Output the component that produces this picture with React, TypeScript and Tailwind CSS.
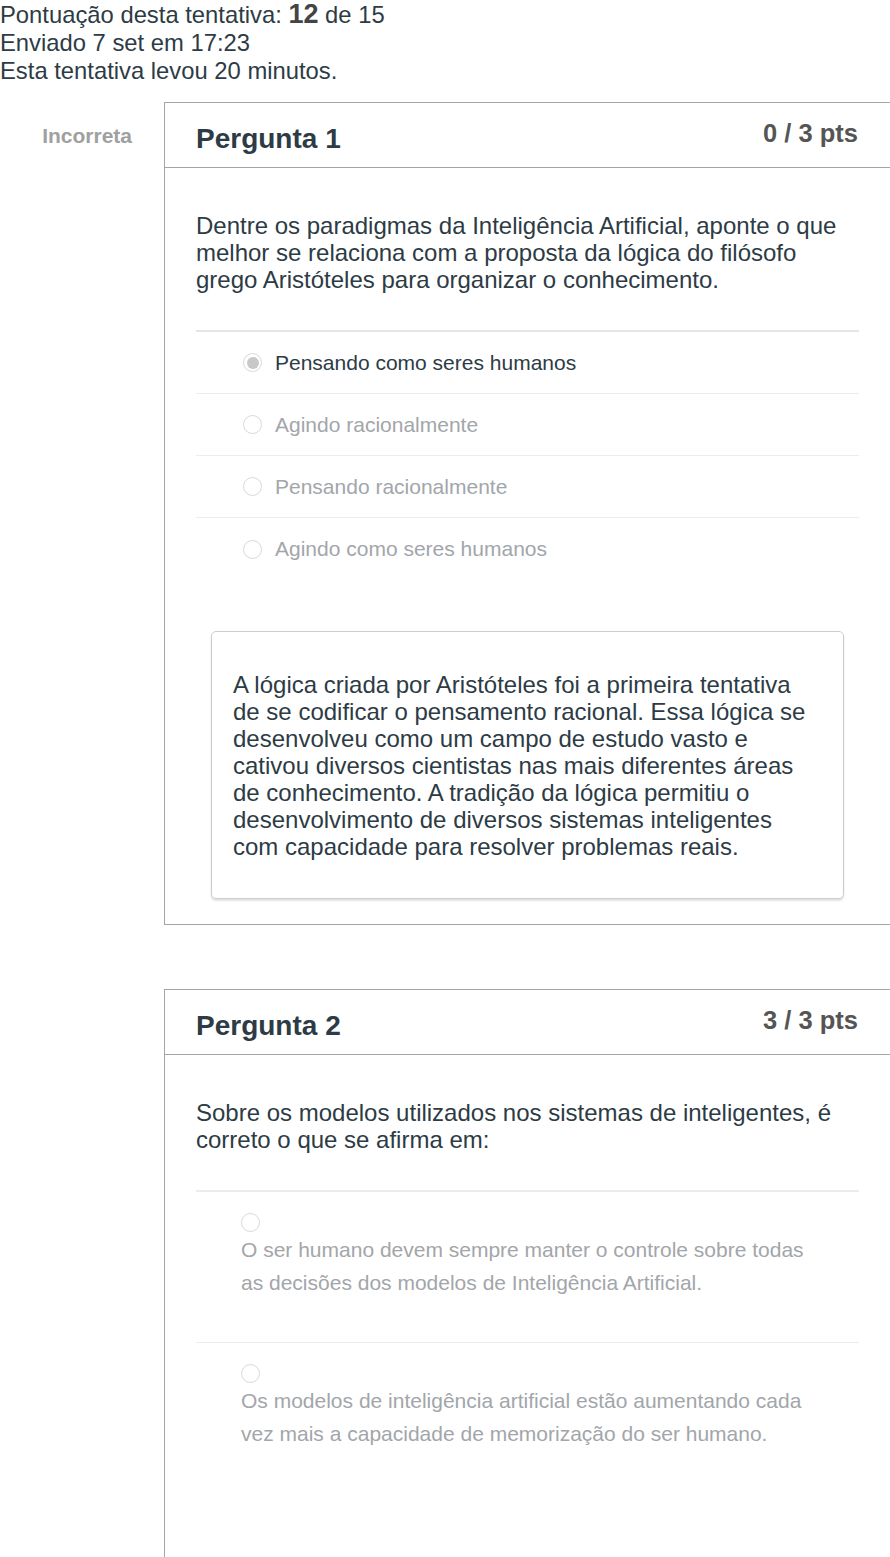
const font = { fontFamily: '"Liberation Sans", Arial, sans-serif' };

type Opt = { lines: string[]; selected?: boolean };

const Radio = ({ selected }: { selected?: boolean }) => (
  <span className="flex items-center justify-center w-[19px] h-[19px] rounded-full border border-[#d7d9db] bg-white shrink-0">
    {selected && <span className="w-[12px] h-[12px] rounded-full bg-[#c8c8c8]" />}
  </span>
);

const Lines = ({ lines }: { lines: string[] }) => (
  <>
    {lines.map((l, i) => (
      <span key={i}>
        {l}
        {i < lines.length - 1 && <br />}
      </span>
    ))}
  </>
);

const CardHeader = ({ title, pts }: { title: string; pts: string }) => (
  <div className="flex justify-between h-[65px] pl-[31px] pr-8 border-b border-[#a5a5a5]">
    <h2 className="mt-[21px] text-[28px] leading-[30px] font-bold text-[#2d3b45]">{title}</h2>
    <span className="mt-[15px] text-[25.5px] leading-[30px] font-bold text-[#555]">{pts}</span>
  </div>
);

const options1: Opt[] = [
  { lines: ["Pensando como seres humanos"], selected: true },
  { lines: ["Agindo racionalmente"] },
  { lines: ["Pensando racionalmente"] },
  { lines: ["Agindo como seres humanos"] },
];

const options2: Opt[] = [
  {
    lines: [
      "O ser humano devem sempre manter o controle sobre todas",
      "as decisões dos modelos de Inteligência Artificial.",
    ],
  },
  {
    lines: [
      "Os modelos de inteligência artificial estão aumentando cada",
      "vez mais a capacidade de memorização do ser humano.",
    ],
  },
];

export default function App() {
  return (
    <div className="w-[890px] min-h-[1557px] bg-white text-[#2d3b45] overflow-hidden" style={font}>
      <div className="text-[23.8px] leading-[28px] text-[#2d3b45] whitespace-nowrap">
        <div>
          Pontuação desta tentativa: <span className="text-[27px] font-bold text-[#444]">12</span> de 15
        </div>
        <div>Enviado 7 set em 17:23</div>
        <div>Esta tentativa levou 20 minutos.</div>
      </div>

      {/* Pergunta 1 */}
      <div className="flex mt-[17px]">
        <div className="w-[164px] shrink-0 pt-[22px] pr-[32px] text-right text-[21px] leading-[24px] font-bold text-[#a0a0a0]">
          Incorreta
        </div>
        <div className="flex-1 border border-r-0 border-[#a5a5a5]">
          <CardHeader title="Pergunta 1" pts="0 / 3 pts" />
          <div className="pl-[31px] pr-[31px] pt-[44px] pb-[25px]">
            <p className="text-[24px] leading-[27px] text-[#2d3b45] whitespace-nowrap">
              <Lines
                lines={[
                  "Dentre os paradigmas da Inteligência Artificial, aponte o que",
                  "melhor se relaciona com a proposta da lógica do filósofo",
                  "grego Aristóteles para organizar o conhecimento.",
                ]}
              />
            </p>
            <div className="mt-[37px] border-t-2 border-[#e5e5e5]">
              {options1.map((o, i) => (
                <div
                  key={i}
                  className={`flex items-center gap-[13px] h-[62px] pl-[47px] ${
                    i < options1.length - 1 ? "border-b border-[#ececec]" : ""
                  }`}
                >
                  <Radio selected={o.selected} />
                  <span className={`text-[21px] ${o.selected ? "text-[#2d3b45]" : "text-[#a2a6aa]"}`}>
                    {o.lines[0]}
                  </span>
                </div>
              ))}
            </div>
            <div className="mx-[15px] mt-[51px] rounded-[5px] border border-[#c7cdd1] shadow-[0_2px_2px_rgba(0,0,0,0.12)] pl-[21px] pt-[39px] pb-[38px]">
              <p className="text-[24px] leading-[27px] text-[#2d3b45] whitespace-nowrap">
                <Lines
                  lines={[
                    "A lógica criada por Aristóteles foi a primeira tentativa",
                    "de se codificar o pensamento racional. Essa lógica se",
                    "desenvolveu como um campo de estudo vasto e",
                    "cativou diversos cientistas nas mais diferentes áreas",
                    "de conhecimento. A tradição da lógica permitiu o",
                    "desenvolvimento de diversos sistemas inteligentes",
                    "com capacidade para resolver problemas reais.",
                  ]}
                />
              </p>
            </div>
          </div>
        </div>
      </div>

      {/* Pergunta 2 */}
      <div className="flex mt-[64px]">
        <div className="w-[164px] shrink-0" />
        <div className="flex-1 border border-r-0 border-b-0 border-[#a5a5a5] min-h-[570px]">
          <CardHeader title="Pergunta 2" pts="3 / 3 pts" />
          <div className="pl-[31px] pr-[31px] pt-[44px]">
            <p className="text-[24px] leading-[27px] text-[#2d3b45] whitespace-nowrap">
              <Lines
                lines={["Sobre os modelos utilizados nos sistemas de inteligentes, é", "correto o que se afirma em:"]}
              />
            </p>
            <div className="mt-[37px] border-t-2 border-[#ececec]">
              {options2.map((o, i) => (
                <div
                  key={i}
                  className={`pl-[45px] pt-[21px] pb-[43px] ${
                    i < options2.length - 1 ? "border-b border-[#ececec]" : ""
                  }`}
                >
                  <Radio />
                  <p className="mt-[1px] text-[21px] leading-[33px] text-[#a2a6aa] whitespace-nowrap">
                    <Lines lines={o.lines} />
                  </p>
                </div>
              ))}
            </div>
          </div>
        </div>
      </div>
    </div>
  );
}
